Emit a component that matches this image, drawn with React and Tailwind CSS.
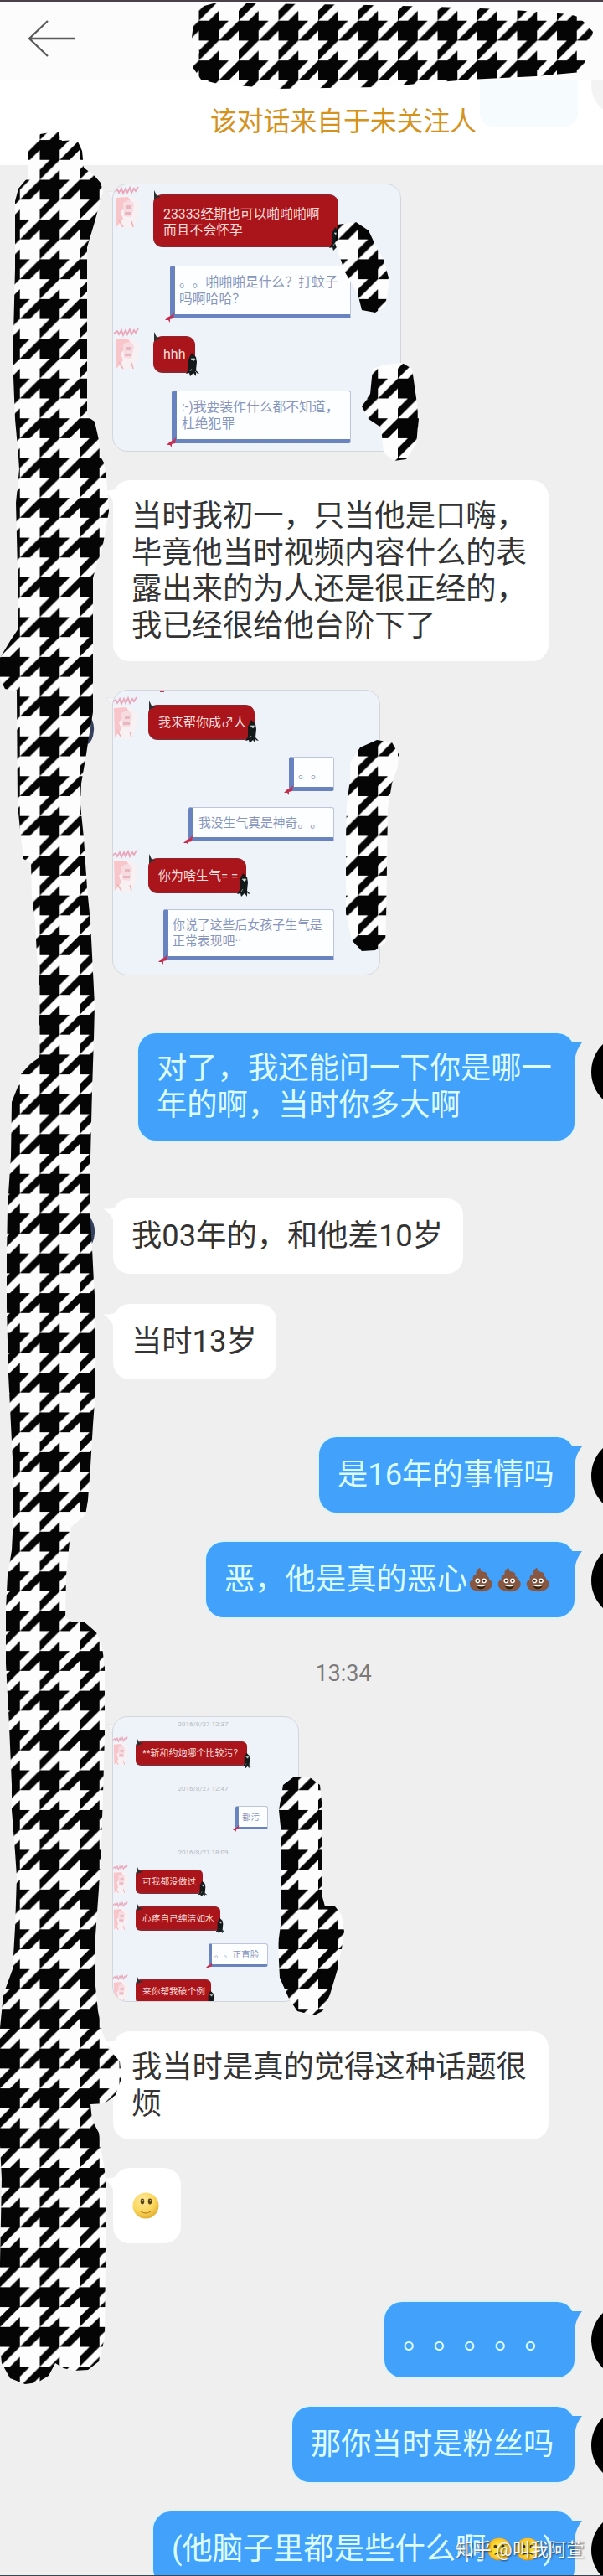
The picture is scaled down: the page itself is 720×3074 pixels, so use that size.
import React from "react";

const FONT = "font-[Roboto,'Noto_Sans_CJK_SC',sans-serif]";
const EMOJI_FONT = "font-['Noto_Color_Emoji',Roboto,sans-serif]";

function Received({ className = "", children }) {
  return (
    <div className={`relative ml-[135px] self-start rounded-[20px] bg-white pl-[22px] text-[36.3px] leading-[43.5px] text-[#333] ${className}`}>
      <svg className="absolute -left-[12px] top-[8px]" width="32" height="24" viewBox="0 0 32 24">
        <path d="M0 4 Q10 6 20 0 L32 10 L14 24 Q12 12 0 4Z" fill="#fff" />
      </svg>
      <div className="relative whitespace-nowrap">{children}</div>
    </div>
  );
}

function Sent({ className = "", children }) {
  return (
    <div className={`relative flex justify-end pr-[34px] ${className}`}>
      <div className="relative h-full rounded-[21px] bg-[#42a1fb] pl-[22px] text-[36.3px] leading-[43.5px] text-[#dcfdff] shadow-[0_0_2px_1px_#cdf8ff]">
        <svg className="absolute -right-[10px] top-[3px]" width="26" height="34" viewBox="0 0 26 34">
          <path d="M0 0 Q8 2 13 8 L25 8 Q18 16 16 30 L4 34Z" fill="#42a1fb" />
        </svg>
        <div className="relative whitespace-nowrap">{children}</div>
      </div>
      <div className="absolute left-[706px] top-0 h-[92px] w-[92px] rounded-full bg-black" />
    </div>
  );
}

function Avatar({ small, className = "" }) {
  return (
    <svg className={`absolute ${className}`} width={small ? 20 : 33} height={small ? 36 : 52} viewBox="0 0 33 52" preserveAspectRatio="none">
      <path d="M2 12 L22 12 L32 20 L30 38 L22 51 L5 48 Z" fill="#f8f1f4" />
      <path d="M3 14 L18 13 L22 20 L16 23 L9 31 L12 39 L4 49 Z" fill="#f8c6ca" />
      <path d="M12 20 Q22 13 25 23 L22 37 L13 36 Z" fill="#f6dbe1" />
      <path d="M16 23h6v4h-6zM14 31h8v3h-8z" fill="#e8b6be" />
      <path d="M7 41l5 8M22 42l2 7" stroke="#efb3b5" strokeWidth="1.5" />
      <path d="M1 7l4-3 2 4 3-5 2 6 3-6 2 5 3-6 2 6 3-5 2 3 3-5" fill="none" stroke="#eba6ba" strokeWidth="1.8" />
    </svg>
  );
}

function Red({ className = "", small, avatar, children }) {
  return (
    <div className={`relative self-start whitespace-nowrap border-b-2 border-t border-[#8c2730] bg-[#a9151b] text-[#fbdcda] ${small ? "rounded-[6px]" : "rounded-[11px]"} ${className}`}>
      {children}
      <svg className="absolute -top-[6px] left-0" width="10" height="12" viewBox="0 0 10 12">
        <path d="M1 0 L4 6 L9 8 L4 9 L1 12 Z" fill="#2b3031" />
      </svg>
      <svg className="absolute -bottom-[6px] -right-[6px]" width={small ? 12 : 18} height={small ? 20 : 28} viewBox="0 0 18 28">
        <path d="M8 0 L13 5 L14 11 L13 21 L17 25 L13 24 L13 28 L10 24 L6 28 L5 24 L1 25 L4 20 L4 8 Z" fill="#14191a" />
        <path d="M7 7h5l-2 3zM6 22l2-3M12 22l2 2" fill="#dfe8e4" stroke="#9fb0aa" strokeWidth=".8" />
      </svg>
      <Avatar small={small} className={avatar} />
    </div>
  );
}

function Note({ className = "", small, children }) {
  return (
    <div className={`relative self-end whitespace-nowrap rounded-[3px] border-b-[#6883c0] border-l-[#6883c0] border-r border-t border-r-[#bcc5da] border-t-[#bcc5da] bg-[#fdfeff] text-[#8896bd] ${small ? "border-b-[3px] border-l-[4px]" : "border-b-[5px] border-l-[6px]"} ${className}`}>
      {children}
      <svg className={`absolute ${small ? "-bottom-[6px] -left-[7px]" : "-bottom-[10px] -left-[12px]"}`} width={small ? 8 : 12} height={small ? 8 : 12} viewBox="0 0 12 12">
        <path d="M11 0 L10 7 L6 8 L6 12 L4 9 L0 9 L4 5 L7 4Z" fill="#c72f50" />
      </svg>
    </div>
  );
}

function Card({ className = "", children }) {
  return (
    <div className={`relative ml-[134px] ${className}`}>
      <svg className="absolute -left-[8px] top-[9px]" width="12" height="16" viewBox="0 0 12 16">
        <path d="M0 1 L12 0 L9 15 Q7 6 0 1Z" fill="#f4f3f5" stroke="#dcdde0" strokeWidth=".5" />
      </svg>
      <div className="relative flex h-full flex-col overflow-hidden rounded-[18px] border border-[#d3d7dd] bg-[#edf3f8] [&>*]:shrink-0">{children}</div>
    </div>
  );
}

const SCRIBBLES = [
  "M232 20L240 8L255 4L300 4L440 6L520 8L600 11L680 17L690 20L698 27L708 38L705 52L700 70L694 86L640 91L560 95L500 100L450 104L330 106L260 100L240 95L230 80L238 62L229 45Z",
  "M60 158L70 158L74 168L92 167L98 180L100 200L113 210L120 218L123 228L113 265L104 295L104 497L113 503L118 525L120 545L124 552L127 570L130 610L122 655L115 675L111 690L111 850L106 880L103 900L97 935L96 960L100 1000L104 1060L108 1100L110 1140L113 1200L112 1240L110 1300L108 1380L107 1440L110 1490L112 1530L114 1560L114 1660L111 1700L108 1750L105 1790L102 1808L85 1822L82 1850L79 1880L78 1930L85 1935L100 1935L115 1948L122 1965L125 1990L125 2070L123 2140L121 2200L119 2240L114 2310L113 2360L117 2400L122 2425L130 2445L143 2460L145 2480L138 2500L125 2510L108 2511L110 2530L118 2545L120 2560L125 2590L127 2620L126 2700L125 2790L118 2818L105 2828L88 2829L76 2826L66 2820L58 2835L45 2843L30 2845L12 2838L2 2820L0 2800L0 2700L2 2600L0 2560L0 2420L4 2380L15 2350L18 2300L20 2240L18 2210L14 2160L14 2130L11 2060L7 1985L7 1920L9 1880L14 1850L16 1810L16 1760L13 1700L10 1640L8 1560L8 1500L9 1440L13 1380L14 1315L22 1295L25 1282L35 1270L47 1262L47 1180L44 1140L42 1100L38 1070L37 1030L28 1025L25 1000L21 960L20 825L6 822L0 810L0 785L12 765L22 750L21 680L19 600L23 560L22 545L18 500L16 450L16 400L18 320L18 240L22 225L33 212L33 180L48 160Z",
  "M403 268L425 265L440 275L447 290L458 310L465 335L460 365L448 373L432 370L427 350L412 325L400 290Z",
  "M445 440L460 435L480 433L492 440L497 475L500 500L497 530L485 548L470 550L458 540L455 510L440 500L432 485L442 470Z",
  "M418 910L430 892L450 883L468 886L476 900L475 915L468 935L463 965L461 1100L460 1125L448 1134L432 1135L420 1122L413 1090L413 1000L414 960L418 930Z",
  "M338 2130L350 2121L370 2121L382 2130L384 2150L384 2260L388 2275L400 2275L408 2285L411 2305L408 2325L403 2350L394 2380L385 2400L375 2405L355 2400L345 2385L334 2360L332 2320L336 2290L336 2190L333 2160Z",
];

function Scribbles() {
  return (
    <svg className="pointer-events-none absolute left-0 top-0" width="720" height="3074" viewBox="0 0 720 3074">
      <defs>
        <pattern id="houndstooth" x="0" y="24.7" width="47.5" height="47.45" patternUnits="userSpaceOnUse" viewBox="0 0 4 4" preserveAspectRatio="none">
          <rect width="4" height="4" fill="#fdfdfd" />
          <path d="M0 0H3L2 1V2H0Z M4 0V1L3 2H2Z M0 4V3L1 2H2Z M2 3V4H1Z" fill="#050505" />
        </pattern>
      </defs>
      <path d="M106 852 q7 10 6 20 q-1 12 -7 16Z M107 1452 q7 9 6 20 q-1 12 -7 16Z" fill="#34405e" />
      {SCRIBBLES.map((d, i) => (
        <path key={i} d={d} fill="url(#houndstooth)" />
      ))}
    </svg>
  );
}

function Smile() {
  return (
    <svg width="34" height="34" viewBox="0 0 34 34">
      <defs>
        <radialGradient id="face" cx=".4" cy=".3" r=".75">
          <stop offset="0" stopColor="#ffe99a" />
          <stop offset=".6" stopColor="#fad65a" />
          <stop offset="1" stopColor="#dfaa2c" />
        </radialGradient>
      </defs>
      <circle cx="17" cy="17" r="15.5" fill="url(#face)" />
      <ellipse cx="13" cy="12" rx="2.3" ry="3.4" fill="#5b4512" />
      <ellipse cx="22" cy="12" rx="2.3" ry="3.4" fill="#5b4512" />
      <circle cx="13.5" cy="11" r=".8" fill="#fff" />
      <circle cx="22.5" cy="11" r=".8" fill="#fff" />
      <path d="M11 24 Q17 28 23 24" fill="none" stroke="#c58a2a" strokeWidth="1.4" />
    </svg>
  );
}

export default function App() {
  return (
    <div className={`relative h-[3074px] w-[720px] overflow-hidden bg-[#efefef] [text-spacing-trim:space-all] ${FONT}`}>
      <header className="flex h-[96px] items-center border-b border-t-2 border-b-[#b9b9b9] border-t-[#4a4248] bg-[#fcfcfc] pl-[33px]">
        <svg className="-mt-[5px]" width="58" height="48" viewBox="0 0 58 48" fill="none" stroke="#5a5a5a" strokeWidth="2.3">
          <path d="M24 3 L2 24 L24 45 M2 24 H56" />
        </svg>
      </header>
      <div className="relative flex h-[101px] justify-center overflow-hidden bg-white pl-[100px] pt-[26px] text-[31.8px] leading-[46px] text-[#d4921f]">
        <div className="absolute left-[573px] top-0 h-[56px] w-[117px] rounded-b-[18px] bg-[#f6fbfe]" />
        <div className="absolute left-[706px] -top-[30px] h-[72px] w-[72px] rounded-full bg-[#f3f3f3]" />
        <span className="relative">该对话来自于未关注人</span>
      </div>

      <main className="flex h-[2877px] flex-col overflow-hidden [&>*]:shrink-0">
        <Card className="mt-[22px] h-[320px] w-[345px]">
          <Red className="ml-[48px] mt-[12px] h-[63px] w-[221px] pl-[12px] pt-[13px] text-[15.8px] leading-[19px]" avatar="-left-[48px] -top-[11px]">
            23333经期也可以啪啪啪啊<br />而且不会怀孕
          </Red>
          <Note className="mr-[59px] mt-[22px] h-[63px] w-[216px] pl-[5px] pt-[9px] text-[15.8px] leading-[19.5px]">
            。。啪啪啪是什么？打蚊子<br />吗啊哈哈？
          </Note>
          <Red className="ml-[48px] mt-[21px] h-[44px] w-[50px] pl-[12px] pt-[11px] text-[16px] leading-[20px]" avatar="-left-[48px] -top-[11px]">
            hhh
          </Red>
          <Note className="mr-[59px] mt-[21px] h-[63px] w-[214px] pl-[6px] pt-[9px] text-[15.8px] leading-[19.5px]">
            :-)我要装作什么都不知道，<br />杜绝犯罪
          </Note>
        </Card>

        <Received className="mt-[34px] h-[216px] w-[520px] pt-[21px]">
          当时我初一，只当他是口嗨，<br />毕竟他当时视频内容什么的表<br />露出来的为人还是很正经的，<br />我已经很给他台阶下了
        </Received>

        <Card className="mt-[34px] h-[341px] w-[320px]">
          <div className="absolute left-[56px] top-0 h-[2px] w-[5px] bg-[#c72f50]" />
          <Red className="ml-[42px] mt-[17px] h-[42px] w-[127px] pl-[12px] pt-[10px] text-[15px] leading-[20px]" avatar="-left-[44px] -top-[11px]">
            我来帮你成♂人
          </Red>
          <Note className="mr-[54px] mt-[20px] h-[41px] w-[54px] pl-[5px] pt-[9px] text-[15px] leading-[20px]">。。</Note>
          <Note className="mr-[54px] mt-[19px] h-[41px] w-[174px] pl-[6px] pt-[9px] text-[14.8px] leading-[18px]">
            我没生气真是神奇。。
          </Note>
          <Red className="ml-[42px] mt-[20px] h-[42px] w-[117px] pl-[12px] pt-[10px] text-[15px] leading-[20px]" avatar="-left-[44px] -top-[11px]">
            你为啥生气= =
          </Red>
          <Note className="mr-[54px] mt-[19px] h-[61px] w-[204px] pl-[5px] pt-[9px] text-[14.9px] leading-[19px]">
            你说了这些后女孩子生气是<br />正常表现吧··
          </Note>
        </Card>

        <Sent className="mt-[69px] h-[128px]">
          <div className="w-[499px] pt-[20px]">对了，我还能问一下你是哪一<br />年的啊，当时你多大啊</div>
        </Sent>
        <Received className="mt-[69px] h-[90px] w-[418px] pt-[23px]">我03年的，和他差10岁</Received>
        <Received className="mt-[36px] h-[90px] w-[195px] pt-[23px]">当时13岁</Received>
        <Sent className="mt-[69px] h-[90px]">
          <div className="w-[283px] pt-[23px]">是16年的事情吗</div>
        </Sent>
        <Sent className="mt-[35px] h-[90px]">
          <div className="flex w-[418px] pt-[23px]">
            恶，他是真的恶心
            <span className={`flex pt-[1px] text-[26px] ${EMOJI_FONT}`}><span className="w-[34px]">💩</span><span className="w-[34px]">💩</span><span className="w-[34px]">💩</span></span>
          </div>
        </Sent>

        <time className="mt-[57px] block h-[20px] pl-[100px] text-center text-[27px] leading-[21px] text-[#7b7b7b]">13:34</time>

        <Card className="mt-[41px] h-[341px] w-[223px]">
          <div className="mt-[3px] pl-[54px] pr-[60px] text-center whitespace-nowrap text-[8px] leading-[11px] text-[#b4bac5]">2016/8/27 12:37</div>
          <Red small className="ml-[27px] mt-[15px] h-[29px] w-[133px] pl-[8px] pt-[5px] text-[11px] leading-[17px]" avatar="-left-[28px] -top-[7px]">
            **斩和约炮哪个比较污？
          </Red>
          <div className="mt-[22px] pl-[54px] pr-[60px] text-center whitespace-nowrap text-[8px] leading-[11px] text-[#b4bac5]">2016/8/27 12:47</div>
          <Note small className="mr-[36px] mt-[15px] h-[28px] w-[39px] pl-[4px] pt-[4px] text-[10.5px] leading-[17px]">都污</Note>
          <div className="mt-[22px] pl-[54px] pr-[60px] text-center whitespace-nowrap text-[8px] leading-[11px] text-[#b4bac5]">2016/8/27 18:09</div>
          <Red small className="ml-[27px] mt-[15px] h-[29px] w-[80px] pl-[8px] pt-[5px] text-[10.7px] leading-[17px]" avatar="-left-[28px] -top-[7px]">
            可我都没做过
          </Red>
          <Red small className="ml-[27px] mt-[15px] h-[29px] w-[101px] pl-[8px] pt-[5px] text-[10.7px] leading-[17px]" avatar="-left-[28px] -top-[7px]">
            心疼自己纯洁如水
          </Red>
          <Note small className="mr-[36px] mt-[15px] h-[28px] w-[71px] pl-[3px] pt-[4px] text-[10.7px] leading-[17px]">。。正直脸</Note>
          <Red small className="ml-[27px] mt-[15px] h-[29px] w-[90px] pl-[8px] pt-[5px] text-[10.7px] leading-[17px]" avatar="-left-[28px] -top-[7px]">
            来你帮我破个例
          </Red>
        </Card>

        <Received className="mt-[35px] h-[129px] w-[520px] pt-[21px]">我当时是真的觉得这种话题很<br />烦</Received>
        <Received className="mt-[34px] h-[90px] w-[81px] pt-[28px]"><Smile /></Received>

        <Sent className="mt-[70px] h-[90px]">
          <div className="w-[205px] pt-[22px]">。。。。。</div>
        </Sent>
        <Sent className="mt-[35px] h-[90px]">
          <div className="w-[315px] pt-[23px]">那你当时是粉丝吗</div>
        </Sent>
        <Sent className="mt-[35px] h-[90px]">
          <div className="flex w-[481px] pt-[23px]">
            (他脑子里都是些什么啊
            <span className={`flex pt-[1px] text-[26px] ${EMOJI_FONT}`}><span className="w-[34px]">🙁</span><span className="w-[34px]">🙁</span></span>)
          </div>
        </Sent>
      </main>

      <Scribbles />
      <div className="absolute left-[544px] top-[3028px] whitespace-nowrap text-[21.5px] leading-[30px] text-[#f7f7f7] [text-shadow:1px_1px_2px_rgba(0,0,0,0.65)]">知乎 @叫我阿萱</div>
      <div className="absolute bottom-0 left-0 h-[1px] w-full bg-[#3a4652]" />
    </div>
  );
}
